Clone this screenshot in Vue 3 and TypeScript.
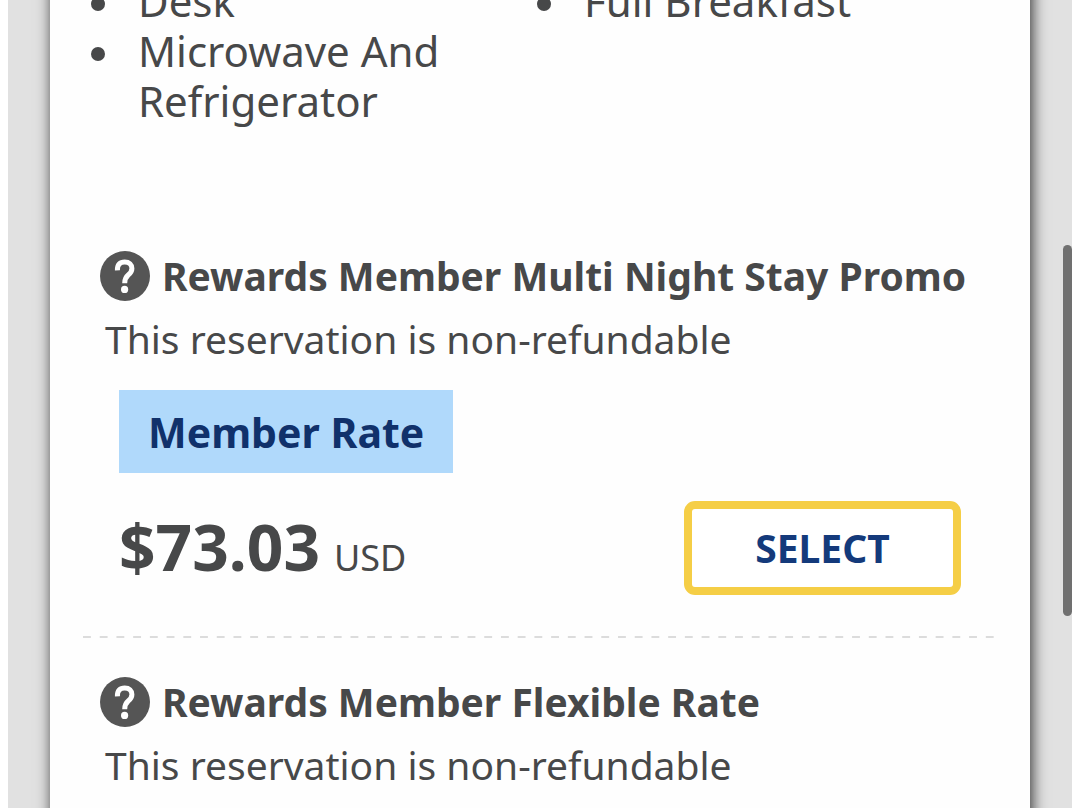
<script setup lang="ts">
interface Rate {
  name: string
  policy: string
  price?: string
}

const amenities: string[][] = [['Desk', 'Microwave And Refrigerator'], ['Full Breakfast']]

const rates: Rate[] = [
  {
    name: 'Rewards Member Multi Night Stay Promo',
    policy: 'This reservation is non-refundable',
    price: '$73.03',
  },
  {
    name: 'Rewards Member Flexible Rate',
    policy: 'This reservation is non-refundable',
  },
]
</script>

<template>
  <div class="screen">
    <div class="backdrop">
      <main class="card">
        <div class="amenities">
          <ul v-for="(column, i) in amenities" :key="i" class="column">
            <li v-for="item in column" :key="item">{{ item }}</li>
          </ul>
        </div>

        <section v-for="rate in rates" :key="rate.name" class="rate">
          <div class="heading">
            <button class="help" type="button" :aria-label="rate.name">
              <svg viewBox="0 0 50 50" width="50" height="50" aria-hidden="true">
                <circle cx="25" cy="25" r="25" fill="#555555" />
                <path
                  d="M17.4 19.4C17.2 13.6 20 11 24.7 11C29.3 11 31.9 13.6 31.9 17.4C31.9 20.6 30.4 22.2 28.2 24C25.8 26 24.7 27.6 24.7 32.2"
                  fill="none"
                  stroke="#ffffff"
                  stroke-width="5"
                />
                <circle cx="24.6" cy="38.4" r="3.6" fill="#ffffff" />
              </svg>
            </button>
            <h2>{{ rate.name }}</h2>
          </div>
          <p class="policy">{{ rate.policy }}</p>
          <template v-if="rate.price">
            <span class="tag">Member Rate</span>
            <div class="offer">
              <p class="price">
                <strong>{{ rate.price }}</strong>
                <span class="currency">USD</span>
              </p>
              <button class="select" type="button">SELECT</button>
            </div>
          </template>
        </section>
      </main>
    </div>
    <div class="scroll-thumb"></div>
  </div>
</template>

<style>
body {
  margin: 0;
  background: #ffffff;
}
</style>

<style scoped>
.screen {
  position: relative;
  box-sizing: border-box;
  height: 100vh;
  padding: 0 8px;
  overflow: hidden;
  background: #ffffff;
  color: #474849;
  font-family: "Noto Sans", "Open Sans", sans-serif;
}

.backdrop {
  box-sizing: border-box;
  min-height: 100%;
  padding: 0 42px;
  background: #e1e1e1;
  overflow: hidden;
}

.card {
  box-sizing: border-box;
  min-height: 100vh;
  margin-top: -40px;
  padding: 16px 28px 40px 32px;
  background: #fefefe;
  box-shadow: 2px 0 14px rgba(0, 0, 0, 0.8);
}

.amenities {
  display: grid;
  grid-template-columns: 1fr 1fr;
  margin-right: 28px;
}

.column {
  margin: 0;
  padding: 0 60px 0 56px;
  font-size: 42px;
  line-height: 50px;
}

.column li {
  list-style: none;
  position: relative;
}

.column li::before {
  content: "";
  position: absolute;
  top: 21px;
  left: -47px;
  width: 14px;
  height: 14px;
  border-radius: 50%;
  background: #474849;
}

.rate {
  padding: 39px 0 43px;
}

.amenities + .rate {
  padding-top: 125px;
}

.rate:not(:last-child) {
  background: linear-gradient(to right, #dcdcdc 8px, transparent 8px) 1px 100% / calc(100% / 55) 2px repeat-x;
}

.heading {
  display: flex;
  align-items: center;
  gap: 12px;
  padding-left: 18px;
}

.help {
  flex: none;
  width: 50px;
  height: 50px;
  padding: 0;
  border: 0;
  background: none;
  cursor: pointer;
}

.help svg {
  display: block;
}

h2 {
  margin: 0;
  font-size: 39px;
  font-weight: 700;
  line-height: 50px;
  white-space: nowrap;
}

.policy {
  margin: 13px 0 0 23px;
  font-size: 39px;
  line-height: 50px;
}

.tag {
  display: inline-block;
  margin: 26px 0 0 37px;
  padding: 17px 29px 16px;
  background: #b0d9fb;
  color: #10316b;
  font-size: 41px;
  font-weight: 700;
  line-height: 50px;
  vertical-align: top;
}

.offer {
  display: flex;
  align-items: center;
  justify-content: space-between;
  margin-top: 28px;
  padding: 0 41px 0 37px;
}

.price {
  display: flex;
  align-items: baseline;
  gap: 14px;
  margin: 0;
  padding-bottom: 2px;
  line-height: 92px;
}

.price strong {
  font-size: 64px;
}

.currency {
  font-size: 36px;
  line-height: 40px;
}

.select {
  width: 277px;
  height: 94px;
  border: 8px solid #f5ce46;
  border-radius: 11px;
  background: #ffffff;
  color: #143a7b;
  font: 700 39px/50px "Noto Sans", "Open Sans", sans-serif;
  cursor: pointer;
}

.scroll-thumb {
  position: absolute;
  top: 245px;
  right: 8px;
  width: 9px;
  height: 371px;
  border-radius: 5px;
  background: #707070;
}
</style>
